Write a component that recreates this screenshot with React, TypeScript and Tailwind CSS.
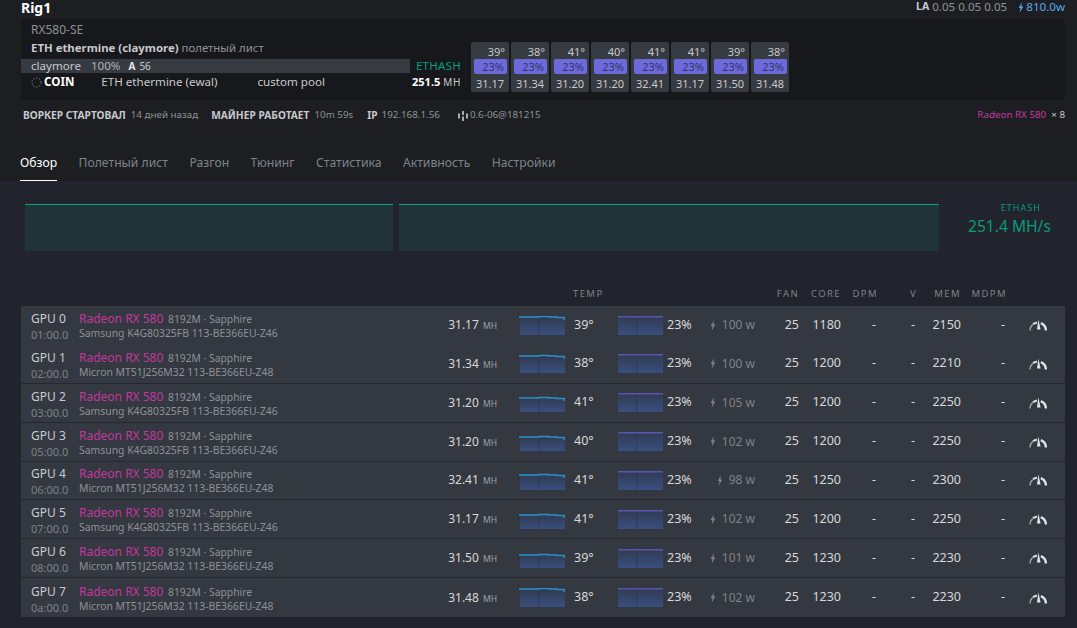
const gpus = [
  { id: "GPU 0", bus: "01:00.0", mem: "Samsung K4G80325FB 113-BE366EU-Z46", hash: "31.17", spark: 1, temp: 39, watt: 100, core: 1180, clock: 2150 },
  { id: "GPU 1", bus: "02:00.0", mem: "Micron MT51J256M32 113-BE366EU-Z48", hash: "31.34", spark: 2, temp: 38, watt: 100, core: 1200, clock: 2210 },
  { id: "GPU 2", bus: "03:00.0", mem: "Samsung K4G80325FB 113-BE366EU-Z46", hash: "31.20", spark: 5, temp: 41, watt: 105, core: 1200, clock: 2250 },
  { id: "GPU 3", bus: "05:00.0", mem: "Samsung K4G80325FB 113-BE366EU-Z46", hash: "31.20", spark: 5, temp: 40, watt: 102, core: 1200, clock: 2250 },
  { id: "GPU 4", bus: "06:00.0", mem: "Micron MT51J256M32 113-BE366EU-Z48", hash: "32.41", spark: 4, temp: 41, watt: 98, core: 1250, clock: 2300 },
  { id: "GPU 5", bus: "07:00.0", mem: "Samsung K4G80325FB 113-BE366EU-Z46", hash: "31.17", spark: 5, temp: 41, watt: 102, core: 1200, clock: 2250 },
  { id: "GPU 6", bus: "08:00.0", mem: "Micron MT51J256M32 113-BE366EU-Z48", hash: "31.50", spark: 6, temp: 39, watt: 101, core: 1230, clock: 2230 },
  { id: "GPU 7", bus: "0a:00.0", mem: "Micron MT51J256M32 113-BE366EU-Z48", hash: "31.48", spark: 1, temp: 38, watt: 102, core: 1230, clock: 2230 },
];

const tabs = ["Полетный лист", "Разгон", "Тюнинг", "Статистика", "Активность", "Настройки"];

const rowGrid = "grid grid-cols-[400px_66px_68px_52px_46px_45px_47px_44px_42px_37px_39px_44px_46px_1fr] items-center";

function Bolt({ className }: { className?: string }) {
  return (
    <svg viewBox="0 0 7 12" className={className} fill="currentColor">
      <path d="M4.6 0 0.8 6.6h2.1L1.9 12 6.2 4.8H3.9z" />
    </svg>
  );
}

function Gauge() {
  return (
    <svg viewBox="0 0 18 12" className="h-[12px] w-[18px]" fill="none">
      <path d="M1 11.5A8 8 0 0 1 3.6 5.6" stroke="#a0a4aa" strokeWidth="1.5" />
      <path d="M3.9 5.3A8 8 0 0 1 8 3.6" stroke="#d5d7da" strokeWidth="2.1" />
      <path d="M9.4 0.6 11.6 10.6H8Z" fill="#e2e3e5" />
      <path d="M11.8 4.1A8 8 0 0 1 16.9 11.5" stroke="#e2e3e5" strokeWidth="2.4" />
    </svg>
  );
}

function Spark({ top, color, gid, jag }: { top: number; color: string; gid: string; jag?: boolean }) {
  return (
    <svg viewBox="0 0 46 19" className="h-[19px] w-[46px]">
      <defs>
        <linearGradient id={gid} x1="0" y1="0" x2="0" y2="1">
          <stop offset="0" stopColor="#303b50" />
          <stop offset="1" stopColor="#3a4f80" />
        </linearGradient>
      </defs>
      <rect x="1" y={top} width="45" height={19 - top} fill={`url(#${gid})`} />
      <rect x="19.5" y={top} width="0.7" height={19 - top} fill="#2d3649" />
      {jag ? (
        <path
          d={`M0 ${top}H20V${top - 0.5}H30V${top}H38V${top + 0.5}H45V${top + 2}H46V${top}`}
          stroke={color}
          strokeWidth="1.4"
          fill="none"
        />
      ) : (
        <path d={`M1 ${top + 0.8}H46`} stroke={color} strokeWidth="1.6" />
      )}
    </svg>
  );
}

function Chart({ className }: { className: string }) {
  return <div className={`h-[47px] border-t border-[#0b9f7f] bg-[#1f3338] ${className}`} />;
}

export default function App() {
  return (
    <div className="h-[628px] w-[1077px] overflow-hidden bg-[#21242c] font-['Noto_Sans',sans-serif] text-[12.5px] text-[#d8d9da]">
      <header className="h-[181px] bg-[#1c1e22] pl-[21px] pr-[12px]">
        <div className="flex h-[19px] justify-between">
          <h1 className="text-[14px] font-bold leading-[16px] text-white">Rig1</h1>
          <div className="flex h-[14px] items-center text-[11.6px] text-[#8e9298]">
            <span className="mr-[3px] text-[10.5px] font-bold text-[#c6cad0]">LA</span>
            0.05 0.05 0.05
            <Bolt className="ml-[11px] mr-[2px] h-[11px] w-[6px] text-[#5aa9e6]" />
            <span className="text-[#5aa9e6]">810.0w</span>
          </div>
        </div>

        <section className="flex h-[81px] rounded-[2px] bg-[#17181c]">
          <div className="w-[440px] shrink-0">
            <p className="pl-[10px] pt-[3px] text-[12px] leading-[16px] text-[#8e9298]">RX580-SE</p>
            <p className="pl-[10px] pt-[2px] text-[11.4px] leading-[15px] text-[#8e9298]">
              <b className="text-[#c8c9cb]">ETH ethermine (claymore)</b> полетный лист
            </p>
            <div className="mt-[4px] flex h-[14px] items-center justify-between text-[11.6px]">
              <div className="flex h-[14px] w-[389px] items-center bg-[#363a41] pl-[10px] text-[#c8c9cb]">
                claymore
                <span className="ml-[10px] text-[#b0b3b8]">100%</span>
                <b className="ml-[8px] text-[10px] text-[#e4e5e7]">A</b>
                <span className="ml-[4px] text-[10px]">56</span>
              </div>
              <span className="tracking-[0.2px] text-[#0a9a7c]">ETHASH</span>
            </div>
            <div className="flex h-[18px] items-center pl-[10px] text-[11.6px] text-[#c8c9cb]">
              <svg viewBox="0 0 12 12" className="h-[11px] w-[11px]" fill="none">
                <circle cx="6" cy="6" r="5" stroke="#7f8389" strokeDasharray="1.6 1.6" />
              </svg>
              <b className="ml-[2px] text-white">COIN</b>
              <span className="ml-[27px]">ETH ethermine (ewal)</span>
              <span className="ml-[40px]">custom pool</span>
              <b className="ml-auto text-[11px] text-white">251.5</b>
              <span className="ml-[3px] text-[10px] tracking-[0.6px]">МН</span>
            </div>
          </div>
          <div className="ml-[10px] mt-[23px] flex h-[50px] gap-[2px]">
            {gpus.map((g) => (
              <div key={g.id} className="w-[38px] rounded-[2px] bg-[#363a41] text-[11px] text-[#c8c9cb]">
                <div className="h-[17px] pr-[4px] text-right leading-[20px]">{g.temp}°</div>
                <div className="ml-[3px] mr-[2px] h-[15px] rounded-[2px] bg-[#6d6bdb] pr-[3px] text-right leading-[15px] text-[#33336a]">23%</div>
                <div className="h-[18px] text-center leading-[20px]">{g.hash}</div>
              </div>
            ))}
          </div>
        </section>

        <div className="flex h-[30px] items-center pl-[2px] pt-[1px] text-[9.8px] text-[#8e9298]">
          <b className="text-[10.2px] text-[#c8c9cb]">ВОРКЕР СТАРТОВАЛ</b>
          <span className="ml-[5px]">14 дней назад</span>
          <b className="ml-[13px] text-[10.2px] text-[#c8c9cb]">МАЙНЕР РАБОТАЕТ</b>
          <span className="ml-[5px]">10m 59s</span>
          <b className="ml-[14px] text-[10.2px] text-[#c8c9cb]">IP</b>
          <span className="ml-[4px]">192.168.1.56</span>
          <svg viewBox="0 0 10 10" className="ml-[18px] h-[10px] w-[10px]" fill="#a8abb0">
            <rect x="0" y="2.5" width="2" height="5" />
            <rect x="4" y="0" width="2" height="4" />
            <rect x="4" y="5.5" width="2" height="4.5" />
            <rect x="8" y="2.5" width="2" height="5" />
          </svg>
          <span className="ml-[2px]">0.6-06@181215</span>
          <span className="ml-auto text-[#c23a9e]">Radeon RX 580</span>
          <span className="ml-[5px] text-[#c8c9cb]">× 8</span>
        </div>

        <nav className="ml-[-1px] mt-[16px] flex h-[35px] gap-[21.4px] text-[12.2px] text-[#7f8389]">
          <a className="h-[35px] border-b border-white leading-[34px] text-white">Обзор</a>
          {tabs.map((t) => (
            <a key={t} className="leading-[34px]">{t}</a>
          ))}
        </nav>
      </header>

      <section className="mt-[23px] flex pl-[25px]">
        <Chart className="w-[368px]" />
        <Chart className="ml-[6px] w-[540px]" />
        <div className="ml-[29px] mt-[-3px] text-[#0a9a7c]">
          <p className="pr-[10px] text-right text-[9px] leading-[14px] tracking-[1px]">ETHASH</p>
          <p className="text-[15.6px] leading-[23px]">251.4 MH/s</p>
        </div>
      </section>

      <main className="mt-[34px] pl-[21px] pr-[12px]">
        <div className={`${rowGrid} h-[19px] pl-[10px] text-[9.5px] tracking-[1.4px] text-[#7f8389]`}>
          <span className="col-start-4 pl-[8px]">TEMP</span>
          <span className="col-start-8 text-right">FAN</span>
          <span className="text-right">CORE</span>
          <span className="text-right">DPM</span>
          <span className="text-right">V</span>
          <span className="text-right">MEM</span>
          <span className="text-right">MDPM</span>
        </div>
        <div className="h-[2px]" />
        {gpus.map((g, i) => (
          <div
            key={g.id}
            className={`${rowGrid} h-[38.875px] bg-[#343840] pl-[10px] ${i > 0 && i < 7 ? "border-b border-[#25282f]" : ""}`}
          >
            <div className="flex items-center pt-[3px]">
              <div className="w-[48px]">
                <div className="text-[12px] leading-[16px] text-[#c8ccd2]">{g.id}</div>
                <div className="text-[11px] leading-[15px] text-[#7f8389]">{g.bus}</div>
              </div>
              <div className="mt-[-3px]">
                <div className="whitespace-nowrap pt-[1px] text-[10.3px] leading-[15px] text-[#8e9298]">
                  <span className="mr-[2px] text-[12px] text-[#c2379f]">Radeon RX 580</span> 8192M · Sapphire
                </div>
                <div className="whitespace-nowrap text-[10.4px] leading-[13px] text-[#8e9298]">{g.mem}</div>
              </div>
            </div>
            <div className="text-right text-[12px] text-[#d8d9da]">
              {g.hash} <span className="ml-[1px] text-[8.5px] text-[#9ca1a8]">МН</span>
            </div>
            <div className="flex justify-end">
              <Spark top={g.spark} color="#2b8fc9" gid={`t${i}`} jag />
            </div>
            <div className="pl-[9px]">{g.temp}°</div>
            <Spark top={0} color="#5b55b0" gid={`f${i}`} />
            <div className="pl-[4px]">23%</div>
            <div className="flex items-center justify-end text-[12px] text-[#7f8389]">
              <Bolt className="mr-[6px] h-[11px] w-[6px]" />
              {g.watt} w
            </div>
            <div className="text-right">25</div>
            <div className="text-right">{g.core}</div>
            <div className="pr-[2px] text-right">-</div>
            <div className="pr-[2px] text-right">-</div>
            <div className="text-right">{g.clock}</div>
            <div className="pr-[2px] text-right">-</div>
            <div className="pl-[22px]">
              <Gauge />
            </div>
          </div>
        ))}
      </main>
    </div>
  );
}
